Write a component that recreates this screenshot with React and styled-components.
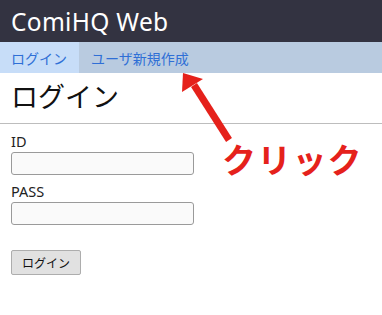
import React from 'react';
import styled, {createGlobalStyle} from 'styled-components';

const JP = `"Noto Sans", "Noto Sans CJK JP", sans-serif`;

const GlobalStyle = createGlobalStyle`
  body {
    margin: 0;
    background: #fff;
    font-family: ${JP};
    color: #222;
  }
`;

const Page = styled.div`
  position: relative;
  width: 382px;
  height: 315px;
  overflow: hidden;
`;

const Header = styled.header`
  height: 42px;
  background: #333341;
  color: #fff;
  display: flex;
  align-items: center;
  padding-left: 11px;
  font-size: 24.5px;
  letter-spacing: 0.3px;
`;

const Nav = styled.nav`
  height: 31px;
  background: #b9cbe0;
  display: flex;
  align-items: stretch;
`;

const NavItem = styled.a`
  display: flex;
  align-items: center;
  padding: 0 12px 0 ${p => p.$first ? '11px' : '12px'};
  background: ${p => p.$active ? '#c7ddf8' : 'transparent'};
  color: #2f6fd6;
  font-size: 14px;
  text-decoration: none;
  cursor: pointer;
`;

const Title = styled.h1`
  margin: 0;
  padding: 6px 11px 8px;
  font-size: 27px;
  font-weight: 400;
  line-height: 36px;
  color: #111;
  border-bottom: 1px solid #bdbdbd;
`;

const Form = styled.form`
  padding: 7px 11px 0;
  display: flex;
  flex-direction: column;
  align-items: flex-start;
`;

const Label = styled.label`
  font-size: 14.5px;
  line-height: 20px;
  color: #222;
  margin-bottom: 1px;
`;

const Input = styled.input`
  width: 183px;
  height: 23px;
  box-sizing: border-box;
  border: 1px solid #9a9a9a;
  border-radius: 3px;
  background: #fafafa;
  margin-bottom: 6px;
`;

const Button = styled.button`
  margin-top: 19px;
  width: 70px;
  height: 25px;
  border: 1px solid #adadad;
  border-radius: 2px;
  background: #e1e1e1;
  font-family: ${JP};
  font-size: 12px;
  color: #111;
`;

const Arrow = styled.svg`
  position: absolute;
  left: 176px;
  top: 70px;
`;

const Note = styled.div`
  position: absolute;
  left: 222px;
  top: 136px;
  font-size: 34px;
  font-weight: 700;
  color: #e5211b;
  letter-spacing: 1.2px;
  line-height: 48px;
`;

export default function App() {
    return (
        <Page>
            <GlobalStyle/>
            <Header>ComiHQ Web</Header>
            <Nav>
                <NavItem $active $first>ログイン</NavItem>
                <NavItem>ユーザ新規作成</NavItem>
            </Nav>
            <Title>ログイン</Title>
            <Form onSubmit={e => e.preventDefault()}>
                <Label>ID</Label>
                <Input type="text"/>
                <Label>PASS</Label>
                <Input type="password"/>
                <Button type="button">ログイン</Button>
            </Form>
            <Arrow width="64" height="76" viewBox="0 0 64 76">
                <line x1="53" y1="70" x2="18" y2="15" stroke="#e5211b" strokeWidth="7"/>
                <polygon points="7,3 27,9 6,22" fill="#e5211b"/>
            </Arrow>
            <Note>クリック</Note>
        </Page>
    );
}
